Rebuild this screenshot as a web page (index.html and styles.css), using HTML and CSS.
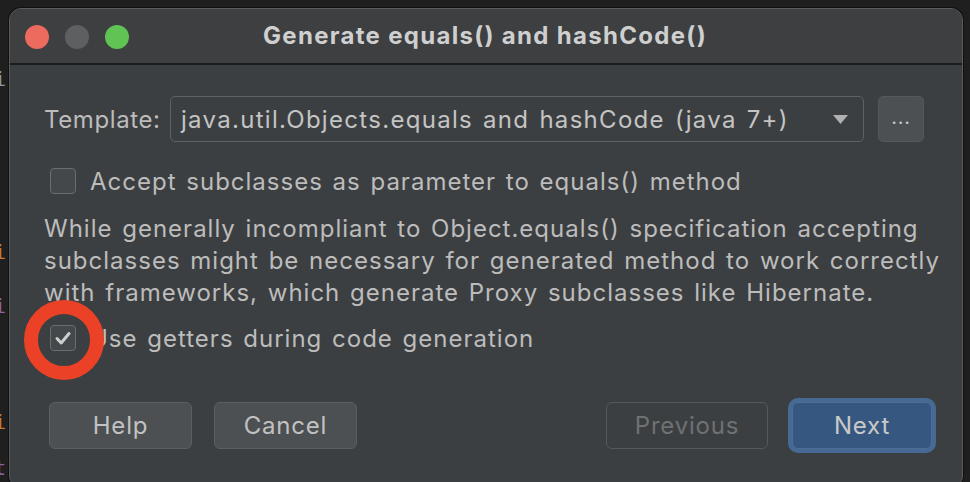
FILE: index.html
```html
<!DOCTYPE html>
<html>
<head>
<meta charset="utf-8">
<link rel="stylesheet" href="styles.css">
</head>
<body>
<div class="desk">
  <div class="editor">
    <span class="g l1">i</span>
    <span class="o l2">i</span>
    <span class="p l3">i</span>
    <span class="o l4">i</span>
    <span class="p l5">t</span>
  </div>
  <div class="window">
    <div class="titlebar">
      <div class="lights">
        <span class="light red"></span>
        <span class="light grey"></span>
        <span class="light green"></span>
      </div>
      <div class="title">Generate equals() and hashCode()</div>
    </div>
    <div class="content">
      <div class="template-row">
        <span class="label">Template:</span>
        <div class="combo">
          <span class="combo-text">java.util.Objects.equals and hashCode (java 7+)</span>
          <svg class="arrow" width="15" height="9" viewBox="0 0 15 9"><path d="M0 0 H15 L7.5 9 Z" fill="#aeb0b2"/></svg>
        </div>
        <div class="dots">...</div>
      </div>
      <div class="check-row first">
        <span class="checkbox"></span>
        <span class="check-label">Accept subclasses as parameter to equals() method</span>
      </div>
      <p class="desc">While generally incompliant to Object.equals() specification accepting subclasses might be necessary for generated method to work correctly with frameworks, which generate Proxy subclasses like Hibernate.</p>
      <div class="check-row second">
        <span class="checkbox checked">
          <svg width="26" height="26" viewBox="0 0 26 26"><path d="M7 13.5 L11.2 18 L19 8.5" fill="none" stroke="#cdcdcd" stroke-width="3" stroke-linecap="round" stroke-linejoin="round"/></svg>
          <span class="highlight"></span>
        </span>
        <span class="check-label">Use getters during code generation</span>
      </div>
      <div class="buttons">
        <div class="left-buttons">
          <span class="btn">Help</span>
          <span class="btn">Cancel</span>
        </div>
        <div class="right-buttons">
          <span class="btn disabled">Previous</span>
          <span class="btn primary">Next</span>
        </div>
      </div>
    </div>
  </div>
</div>
</body>
</html>
```
FILE: styles.css
```css
* { box-sizing: border-box; }
html, body { margin: 0; padding: 0; }
body {
  width: 970px;
  height: 482px;
  overflow: hidden;
  background: #1f1f1f;
  font-family: "Inter", "Noto Sans", sans-serif;
  color: #bcbcbc;
}
.desk {
  display: flex;
  padding-top: 8px;
  height: 482px;
}
.editor {
  width: 8px;
  flex: none;
  position: relative;
  overflow: hidden;
  font-family: "DejaVu Sans Mono", monospace;
  font-size: 20px;
}
.editor span {
  position: absolute;
  left: -6px;
}
.editor .g { color: #8a9aa8; }
.editor .o { color: #c27a30; }
.editor .p { color: #8a63a4; }
.editor .l1 { top: 59px; }
.editor .l2 { top: 232px; }
.editor .l3 { top: 286px; }
.editor .l4 { top: 402px; }
.editor .l5 { top: 448px; }
.window {
  width: 954px;
  margin-left: 1px;
  height: 480px;
  background: #3c3f41;
  border: 1px solid #5a5c5e;
  border-radius: 12px;
  box-shadow: 0 0 0 1px #101010;
  overflow: hidden;
  display: flex;
  flex-direction: column;
}
.titlebar {
  height: 56px;
  flex: none;
  background: #3d3f41;
  border-bottom: 2px solid #1c1c1c;
  position: relative;
  display: flex;
  align-items: center;
  justify-content: center;
}
.lights {
  position: absolute;
  left: 15px;
  top: 16px;
  display: flex;
  gap: 16px;
}
.light {
  width: 24px;
  height: 24px;
  border-radius: 50%;
}
.red { background: #ec6a5e; }
.grey { background: #5d5f61; }
.green { background: #5fc454; }
.title {
  font-weight: 700;
  font-size: 24px;
  color: #cfcfcf;
  letter-spacing: 1.3px;
  padding-bottom: 2px;
  margin-left: -2px;
}
.content {
  padding: 31px 38px 0 34px;
  font-size: 24px;
  letter-spacing: 1px;
  word-spacing: 2px;
}
.template-row {
  display: flex;
  align-items: center;
  height: 46px;
}
.label {
  width: 126px;
  flex: none;
  letter-spacing: 0.6px;
}
.combo {
  width: 694px;
  height: 46px;
  border: 1.5px solid #5f6163;
  border-radius: 5px;
  display: flex;
  align-items: center;
  justify-content: space-between;
  padding: 0 15px 0 10px;
  color: #c4c4c4;
}
.combo-text { letter-spacing: 1.3px; }
.arrow { margin-top: 1px; }
.dots {
  margin-left: 14px;
  width: 46px;
  height: 46px;
  background: #4c5052;
  border: 1.5px solid #555859;
  border-radius: 5px;
  display: flex;
  justify-content: center;
  align-items: center;
  color: #c4c4c4;
  padding-bottom: 4px;
  font-size: 20px;
  letter-spacing: 0.8px;
}
.check-row {
  display: flex;
  align-items: center;
  height: 26px;
  padding-left: 6px;
}
.check-row.first { margin-top: 26px; }
.check-row.second { margin-top: 16px; }
.checkbox {
  width: 26px;
  height: 26px;
  flex: none;
  border: 1.5px solid #6b6d6e;
  border-radius: 4px;
  background: #43494a;
  position: relative;
  display: flex;
  align-items: center;
  justify-content: center;
}
.checkbox svg { position: absolute; left: -1.5px; top: -1.5px; }
.check-label {
  margin-left: 14px;
}
.highlight {
  position: absolute;
  width: 80px;
  height: 80px;
  left: -27px;
  top: -26px;
  border: 14px solid #eb4126;
  border-radius: 50%;
}
.desc {
  margin: 19px 0 0 0;
  line-height: 32px;
  width: 896px;
}
.buttons {
  margin-top: 51px;
  display: flex;
  justify-content: space-between;
  padding-left: 5px;
}
.left-buttons, .right-buttons {
  display: flex;
  gap: 22px;
}
.right-buttons { gap: 24px; margin-right: -8px; }
.btn {
  height: 47px;
  min-width: 143px;
  padding: 0 20px;
  display: flex;
  align-items: center;
  justify-content: center;
  background: #4c5052;
  border: 1.5px solid #5c5f61;
  border-radius: 6px;
  color: #c2c2c2;
  font-size: 24px;
  letter-spacing: 0.8px;
  word-spacing: 0;
}
.btn.disabled {
  background: transparent;
  border-color: #565859;
  color: #6f7173;
  min-width: 162px;
}
.btn.primary {
  background: #365880;
  border: 1.5px solid #4b6f99;
  box-shadow: 0 0 0 4px #466a93;
  color: #c9c9c9;
  min-width: 140px;
}
```
